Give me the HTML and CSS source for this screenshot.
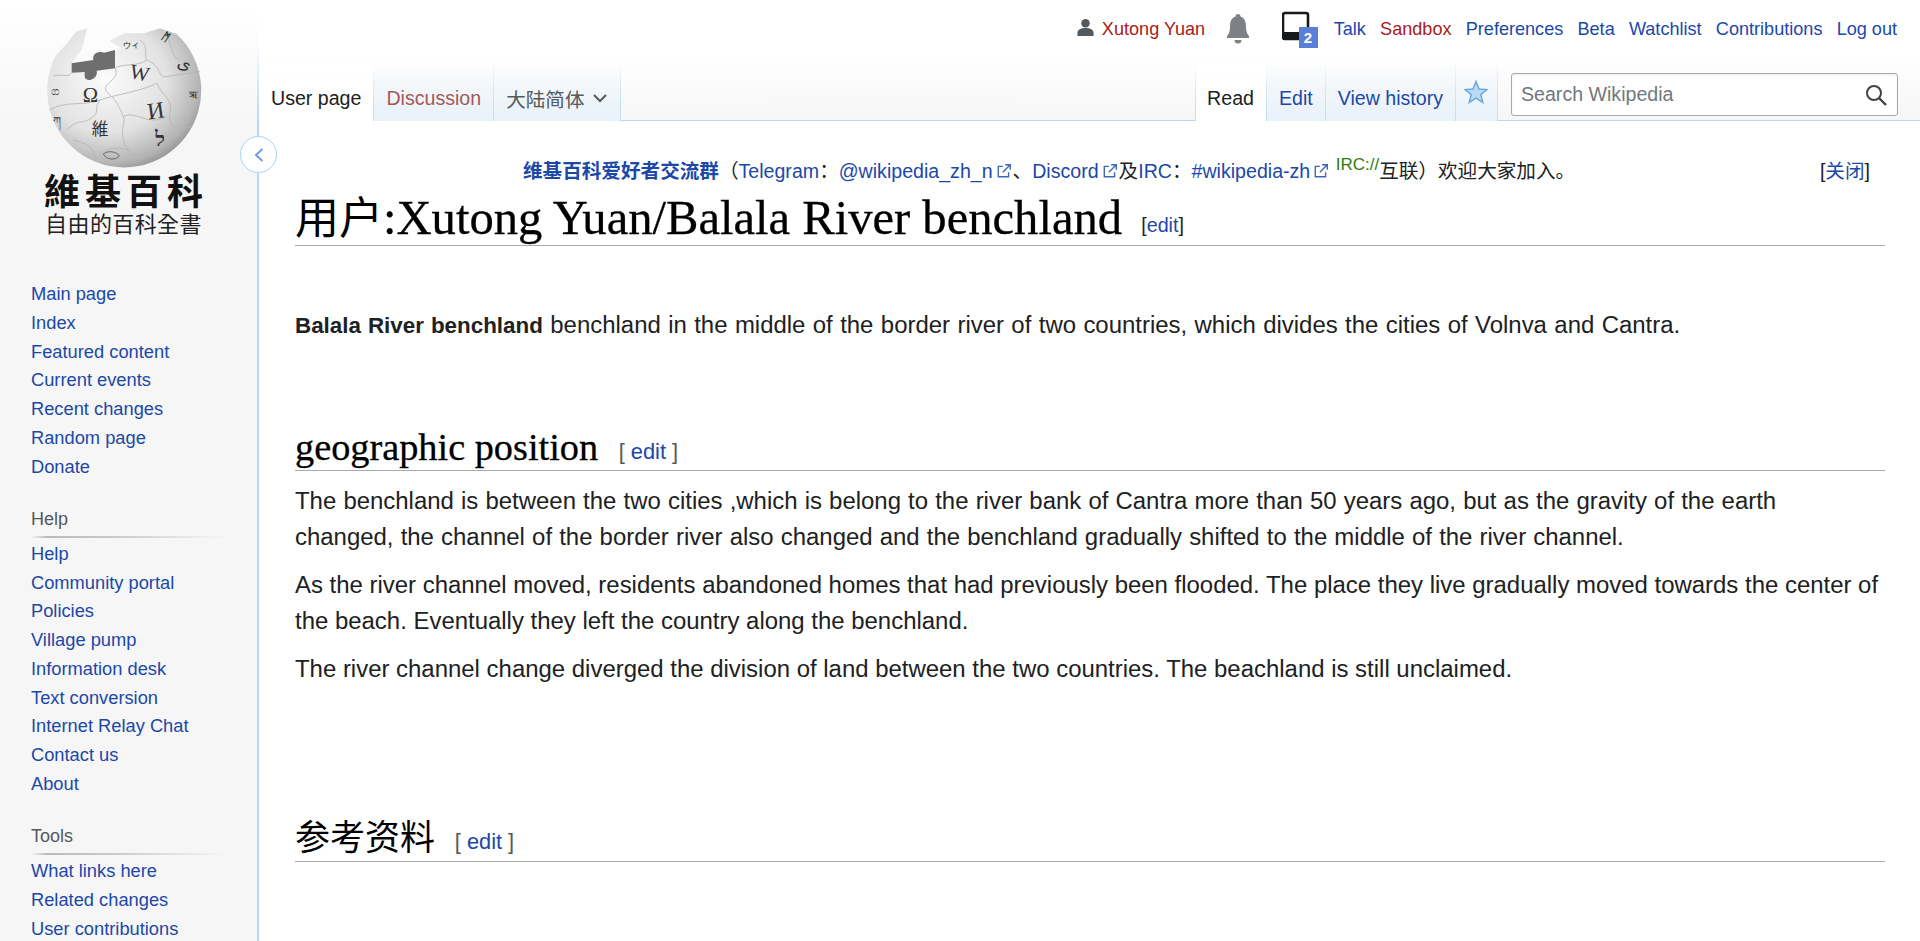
FILE: index.html
```html
<!DOCTYPE html>
<html lang="en">
<head>
<meta charset="utf-8">
<title>Balala River benchland</title>
<link rel="stylesheet" href="styles.css">
</head>
<body>
<div class="page">
  <aside class="sidebar">
    <a class="logo" href="#">
      <svg class="globe" viewBox="0 60 630 450" width="210" height="150" aria-hidden="true">
        <defs>
          <radialGradient id="sph" cx="0.38" cy="0.36" r="0.72">
            <stop offset="0" stop-color="#fbfbfb"/>
            <stop offset="0.55" stop-color="#e2e2e2"/>
            <stop offset="0.85" stop-color="#b4b4b4"/>
            <stop offset="1" stop-color="#858585"/>
          </radialGradient>
        </defs>
        <path fill="url(#sph)" d="M165 170L205 125L228 95L262 85L245 150L215 190L285 178L292 155L340 158L365 145L330 125L335 118L375 100L430 100L480 85L530 102A231 231 0 1 1 165 170Z"/>
        <path fill="#6e6e6e" d="M215 190L280 180C276 160 295 152 312 158L345 150V205L290 212C296 235 262 250 254 232V216L215 218Z"/>
        <g fill="none" stroke="#b4b4b4" stroke-width="2.5">
          <path d="M160 228C190 220 205 235 215 218"/>
          <path d="M148 330C200 300 250 320 300 300C340 285 420 275 470 250"/>
          <path d="M345 205C365 240 300 250 320 275C340 295 350 300 370 350C380 370 350 400 385 450C400 470 420 470 450 450"/>
          <path d="M440 180C490 200 470 235 500 230C530 225 560 220 600 215"/>
          <path d="M470 250C490 290 520 300 510 340C500 380 540 390 570 380"/>
          <path d="M370 350C410 330 440 380 500 350"/>
          <path d="M200 390C240 350 240 380 280 350C300 335 280 320 300 300"/>
          <path d="M220 420C260 430 280 440 290 480"/>
          <path d="M420 120C450 140 430 170 440 180C420 200 360 190 345 205"/>
          <path d="M500 110C520 140 510 170 540 180"/>
          <path d="M385 450C350 440 310 440 290 480"/>
          <path d="M310 462C325 450 350 455 358 468C345 482 320 480 310 462Z" stroke="#555"/>
        </g>
        <g class="globe-glyphs">
          <text x="248" y="306" font-size="62">Ω</text>
          <text x="390" y="240" font-size="62" transform="rotate(12 420 220)">W</text>
          <text x="442" y="355" font-size="70" transform="rotate(-8 470 330)">И</text>
          <text x="275" y="405" font-size="50">維</text>
          <text x="466" y="438" font-size="62" font-weight="700">ל</text>
          <text x="368" y="145" font-size="26" transform="rotate(-5 395 135)">ウィ</text>
          <text x="535" y="205" font-size="52" transform="rotate(20 550 185)">ی</text>
          <text x="153" y="285" font-size="36">ග</text>
          <text x="160" y="375" font-size="34">ཀ</text>
          <text x="486" y="128" font-size="34" font-weight="700" transform="rotate(35 505 118)">ᛗ</text>
          <text x="568" y="295" font-size="30">ऋ</text>
        </g>
      </svg>
      <span class="logo-title">維基百科</span>
      <span class="logo-sub">自由的百科全書</span>
    </a>
    <nav class="portal first">
      <ul>
        <li><a href="#">Main page</a></li>
        <li><a href="#">Index</a></li>
        <li><a href="#">Featured content</a></li>
        <li><a href="#">Current events</a></li>
        <li><a href="#">Recent changes</a></li>
        <li><a href="#">Random page</a></li>
        <li><a href="#">Donate</a></li>
      </ul>
    </nav>
    <nav class="portal">
      <h3>Help</h3>
      <ul>
        <li><a href="#">Help</a></li>
        <li><a href="#">Community portal</a></li>
        <li><a href="#">Policies</a></li>
        <li><a href="#">Village pump</a></li>
        <li><a href="#">Information desk</a></li>
        <li><a href="#">Text conversion</a></li>
        <li><a href="#">Internet Relay Chat</a></li>
        <li><a href="#">Contact us</a></li>
        <li><a href="#">About</a></li>
      </ul>
    </nav>
    <nav class="portal">
      <h3>Tools</h3>
      <ul>
        <li><a href="#">What links here</a></li>
        <li><a href="#">Related changes</a></li>
        <li><a href="#">User contributions</a></li>
      </ul>
    </nav>
  </aside>

  <div class="main">
    <button class="collapse" aria-label="Collapse sidebar">
      <svg viewBox="0 0 12 16" width="12" height="16"><path d="M9.500 2L3 8l6.500 6" fill="none" stroke="#6b9fe0" stroke-width="2"/></svg>
    </button>
    <header class="head">
      <div class="personal">
        <span class="me">
          <svg class="ico-person" viewBox="0 0 20 20" width="19" height="19"><circle cx="10" cy="5.500" r="4.500" fill="#54595d"/><path d="M1.500 19v-3.500c0-3 3.500-5 8.500-5s8.500 2 8.500 5V19z" fill="#54595d"/></svg>
          <a class="red" href="#">Xutong Yuan</a>
        </span>
        <svg class="ico-bell" viewBox="0 0 26 32" width="26" height="32"><path d="M13 1c-1.700 0-2.500 1-2.500 2.500C6 5 5 9 5 14c0 4-1 7-3 9v2h22v-2c-2-2-3-5-3-9 0-5-1-9-5.500-10.500C15.500 2 14.700 1 13 1z" fill="#7d8185"/><path d="M9.500 27a3.500 3.500 0 0 0 7 0z" fill="#7d8185"/></svg>
        <span class="tablet">
          <svg viewBox="0 0 30 32" width="30" height="32"><path d="M3 2h21a2 2 0 0 1 2 2v22a2 2 0 0 1-2 2H3a2 2 0 0 1-2-2V4a2 2 0 0 1 2-2z" fill="none" stroke="#17191b" stroke-width="2.600"/><path d="M1 21h16v7H3a2 2 0 0 1-2-2z" fill="#17191b"/></svg>
          <b class="badge">2</b>
        </span>
        <a href="#">Talk</a>
        <a class="red" href="#">Sandbox</a>
        <a href="#">Preferences</a>
        <a href="#">Beta</a>
        <a href="#">Watchlist</a>
        <a href="#">Contributions</a>
        <a href="#">Log out</a>
      </div>
      <div class="tabbar">
        <div class="tabs">
          <a class="tab active" href="#">User page</a>
          <a class="tab new" href="#">Discussion</a>
          <a class="tab grey" href="#">大陆简体
            <svg viewBox="0 0 16 10" width="16" height="10"><path d="M2 2l6 6 6-6" fill="none" stroke="#54595d" stroke-width="2"/></svg>
          </a>
        </div>
        <div class="tabs right">
          <a class="tab active" href="#">Read</a>
          <a class="tab" href="#">Edit</a>
          <a class="tab" href="#">View history</a>
          <a class="tab star" href="#" aria-label="Watch">
            <svg viewBox="0 0 24 24" width="24" height="24"><path d="M12 1.500l3 7.500 8 .6-6.200 5.100 2 7.800-6.800-4.300-6.800 4.300 2-7.800L1 9.600l8-.6z" fill="#b9daf5" stroke="#6aa9e0" stroke-width="1.500"/></svg>
          </a>
          <div class="search">
            <span>Search Wikipedia</span>
            <svg viewBox="0 0 22 22" width="22" height="22"><circle cx="9" cy="9" r="7" fill="none" stroke="#404244" stroke-width="2"/><path d="M14 14l7 7" stroke="#404244" stroke-width="2.400"/></svg>
          </div>
        </div>
      </div>
    </header>

    <main class="content">
      <div class="notice">
        <p><a class="strong" href="#">维基百科爱好者交流群</a>（<a href="#">Telegram</a>：<a class="ext" href="#">@wikipedia_zh_n</a><svg class="ei" viewBox="0 0 14 14" width="16" height="16"><path d="M6 3H2v9h9V8M6 8l6-6M8 1.500h4.500V6" fill="none" stroke="#3d66b8" stroke-width="1.200"/></svg>、<a class="ext" href="#">Discord</a><svg class="ei" viewBox="0 0 14 14" width="16" height="16"><path d="M6 3H2v9h9V8M6 8l6-6M8 1.500h4.500V6" fill="none" stroke="#3d66b8" stroke-width="1.200"/></svg>及<a href="#">IRC</a>：<a class="ext" href="#">#wikipedia-zh</a><svg class="ei" viewBox="0 0 14 14" width="16" height="16"><path d="M6 3H2v9h9V8M6 8l6-6M8 1.500h4.500V6" fill="none" stroke="#3d66b8" stroke-width="1.200"/></svg> <sup class="irc">IRC://</sup>互联）欢迎大家加入。</p>
        <span class="close">[<a href="#">关闭</a>]</span>
      </div>
      <h1><span class="cjk">用户</span>:Xutong Yuan/Balala River benchland <span class="h1edit">[<a href="#">edit</a>]</span></h1>
      <p class="lead"><b>Balala River benchland</b> benchland in the middle of the border river of two countries, which divides the cities of Volnva and Cantra.</p>
      <h2 class="h-geo">geographic position <span class="secedit">[ <a href="#">edit</a> ]</span></h2>
      <p class="wide">The benchland is between the two cities ,which is belong to the river bank of Cantra more than 50 years ago, but as the gravity of the earth<br>changed, the channel of the border river also changed and the benchland gradually shifted to the middle of the river channel.</p>
      <p>As the river channel moved, residents abandoned homes that had previously been flooded. The place they live gradually moved towards the center of the beach. Eventually they left the country along the benchland.</p>
      <p>The river channel change diverged the division of land between the two countries. The beachland is still unclaimed.</p>
      <h2 class="h-ref">参考资料 <span class="secedit">[ <a href="#">edit</a> ]</span></h2>
    </main>
  </div>
</div>
</body>
</html>
```

FILE: styles.css
```css
* { box-sizing: border-box; }
html, body { margin: 0; height: 100%; }
body {
  background: #fff;
  color: #202122;
  font-family: "Liberation Sans", "Noto Sans CJK SC", sans-serif;
  overflow: hidden;
}
a { color: #1c48a8; text-decoration: none; }
a.red { color: #a82020; }

.page { display: flex; height: 941px; overflow: hidden; }

/* Sidebar */
.sidebar {
  width: 257px;
  flex: none;
  background: linear-gradient(#fff 0, #f6f6f6 130px);
  padding-top: 20px;
}
.logo { display: flex; flex-direction: column; width: 247px; color: #1a1a1a; align-items: center; }
.globe { display: block; flex: none; align-self: flex-start; }
.globe-glyphs { font-family: "Liberation Serif", "Noto Sans CJK JP", "DejaVu Sans", serif; fill: #333; }
.logo-title {
  font-family: "Noto Sans CJK TC", sans-serif;
  font-size: 36px;
  line-height: 38px;
  letter-spacing: 5px;
  font-weight: 700;
  margin-left: 5px;
  color: #111;
}
.logo-sub {
  font-family: "Noto Sans CJK TC", sans-serif;
  font-size: 22px;
  line-height: 24px;
  font-weight: 400;
  letter-spacing: .4px;
  margin-top: 2px;
  color: #222;
}
.portal { margin: 0 0 0 31px; width: 195px; }
.portal.first { margin-top: 46px; }
.portal h3 {
  margin: 0;
  font-size: 18px;
  line-height: 24px;
  font-weight: 400;
  color: #54595d;
  height: 31px;
  background: linear-gradient(to right, rgba(180,180,180,0), #bbb 8%, #c8c8c8 40%, rgba(200,200,200,0)) left bottom / 100% 2px no-repeat;
}
.portal ul { list-style: none; margin: 2px 0 25.500px; padding: 0; }
.portal li { font-size: 18.300px; line-height: 28.750px; white-space: nowrap; }

/* Main column */
.main {
  flex: 1;
  min-width: 0;
  position: relative;
  border-left: 2px solid;
  border-image: linear-gradient(rgba(184,216,242,0) 40px, #b8d8f2 120px) 1;
}
.collapse {
  position: absolute;
  left: -19px;
  top: 136px;
  width: 37px;
  height: 37px;
  padding: 0;
  border: 1.500px solid #a9d2f3;
  border-radius: 50%;
  background: #fff;
  display: flex;
  align-items: center;
  justify-content: center;
}
.head {
  height: 121px;
  background: linear-gradient(#fff 55px, #f6f6f6 121px);
  display: flex;
  flex-direction: column;
  justify-content: space-between;
}
.personal {
  display: flex;
  justify-content: flex-end;
  align-items: center;
  gap: 14.200px;
  height: 58px;
  padding-right: 23px;
  font-size: 18.100px;
  white-space: nowrap;
}
.me { display: flex; align-items: center; gap: 7px; }
.ico-person { margin-bottom: 4px; }
.ico-bell { margin: 0 16px 0 6px; }
.tablet { width: 36px; height: 34px; margin: 0 2px 2px 0; position: relative; }
.tablet svg { display: block; }
.badge {
  position: absolute;
  right: 0;
  bottom: -3px;
  width: 19px;
  height: 21px;
  background: #5a7fd6;
  color: #fff;
  font-size: 15px;
  line-height: 21px;
  text-align: center;
}
.tabbar {
  display: flex;
  justify-content: space-between;
  height: 58px;
  border-bottom: 1px solid #b8d8f2;
}
.tabs { display: flex; align-items: stretch; }
.tab {
  display: flex;
  align-items: center;
  gap: 7px;
  padding: 12px 12px 0;
  margin-bottom: -1px;
  font-size: 19.600px;
  white-space: nowrap;
  border-right: 1px solid;
  border-image: linear-gradient(rgba(197,223,244,0), #c5dff4 70%) 1;
  background: linear-gradient(rgba(230,242,252,0), #e8f2fa);
}
.tab.active { background: #fff linear-gradient(rgba(255,255,255,0), #fff); color: #202122; }
.tab.new { color: #a55858; }
.tab.grey { color: #54595d; }
.tabs.right .tab.active { border-left: 1px solid; padding-left: 11px; }
.tab.star { padding: 0 8px; width: 42px; }
.search {
  width: 387px;
  height: 43px;
  margin: 10px 22px 0 13px;
  align-self: flex-start;
  border: 1px solid #a2a9b1;
  border-radius: 3px;
  background: #fff;
  box-shadow: inset 0 1px 2px rgba(0,0,0,.08);
  display: flex;
  align-items: center;
  justify-content: space-between;
  padding: 0 10px 0 9px;
  font-size: 19.600px;
  color: #72777d;
}

/* Content */
.content { padding: 0 35px 0 36px; font-size: 23.950px; line-height: 36px; }
.notice {
  display: flex;
  justify-content: space-between;
  align-items: baseline;
  height: 36px;
  margin-top: 32px;
  padding: 0 15px 0 228px;
  font-size: 19.600px;
  line-height: 36px;
  color: #202122;
}
.notice p { margin: 0; white-space: nowrap; }
.content .notice p { margin: 0; }
.strong { font-weight: 700; }
.ei { vertical-align: -1px; margin: 0 1px 0 3px; }
.irc { color: #2f7d10; font-size: 17px; line-height: 0; vertical-align: 8.500px; }
h1, h2 {
  font-family: "Liberation Serif", "Noto Sans CJK SC", serif;
  font-weight: 400;
  color: #000;
  margin: 0;
  border-bottom: 1.500px solid #a8abae;
  -webkit-text-stroke: .3px #000;
}
h1 { font-size: 48.600px; line-height: 54px; height: 58px; margin-top: -1px; white-space: nowrap; }
.cjk { font-family: "Noto Sans CJK SC", sans-serif; font-size: 44px; -webkit-text-stroke: 0; }
.h1edit { font-family: "Liberation Sans", sans-serif; font-size: 19.700px; margin-left: 7px; vertical-align: 2px; -webkit-text-stroke: 0; color: #202122; }
h2 { font-size: 38.300px; line-height: 42px; }
.secedit { font-family: "Liberation Sans", sans-serif; font-size: 21.800px; color: #54595d; margin-left: 11px; vertical-align: 1px; -webkit-text-stroke: 0; }
.h-geo { margin-top: 82px; height: 45px; }
.h-ref { margin-top: 131px; height: 44px; font-size: 35px; -webkit-text-stroke: 0; }
.content p { margin: 12px 0 0; }
.content .lead { margin-top: 61px; word-spacing: .75px; }
.lead b { font-size: 22.400px; }
.wide { word-spacing: .5px; }
```
